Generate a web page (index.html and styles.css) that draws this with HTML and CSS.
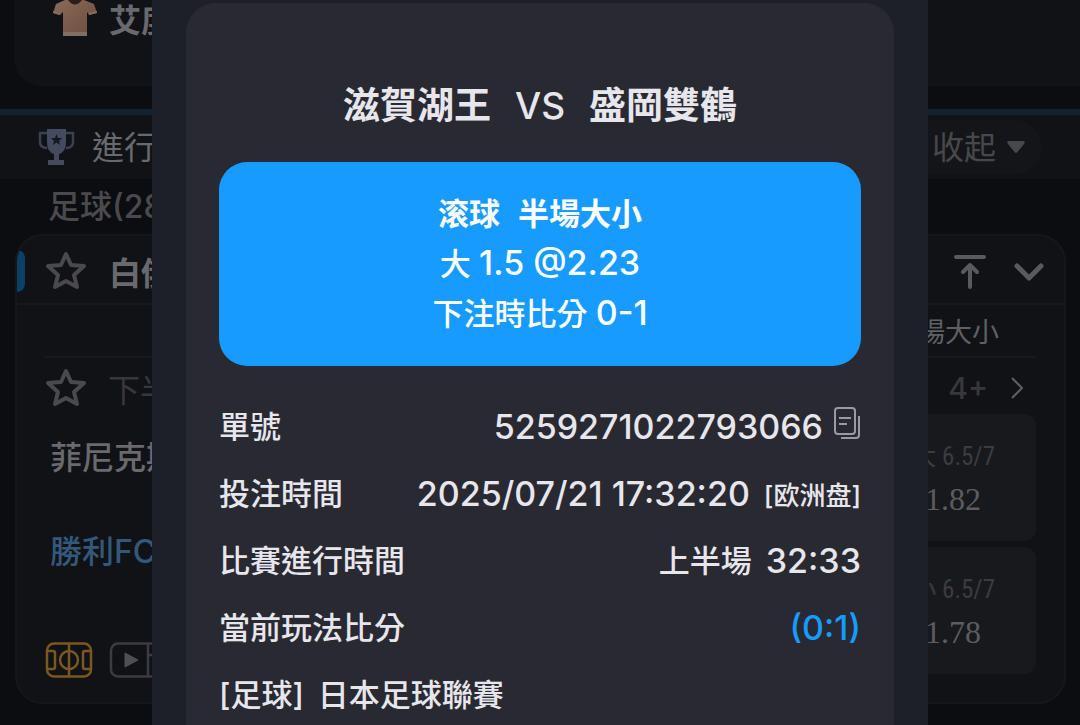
FILE: index.html
```html
<!DOCTYPE html>
<html lang="zh-Hant">
<head>
    <meta charset="UTF-8">
    <meta name="viewport" content="width=device-width, initial-scale=1.0">
    <title>注單詳情</title>
    <link rel="stylesheet" href="styles.css">
</head>
<body>
    <main class="page">
        <section class="top-card">
            <svg class="shirt" width="46" height="46" viewBox="0 0 46 46">
                <defs>
                    <linearGradient id="shirtFill" x1="0" y1="0" x2="1" y2="1">
                        <stop offset="0" stop-color="#8a6a58"/>
                        <stop offset="1" stop-color="#6b4c3e"/>
                    </linearGradient>
                </defs>
                <path d="M13 9 L32 9 L42 13 L45 22 L37 24 L35 21 V45 H11 V21 L8 24 L1 22 L4 13 Z" fill="url(#shirtFill)"/>
                <path d="M1 20 L8 22 V24 L1 22 Z M45 20 L37 22 V24 L45 22 Z M11 41 H35 V45 H11 Z" fill="#806f66"/>
                <path d="M16 9 Q23 18 30 9 Z" fill="#301c18"/>
            </svg>
            <b>艾度</b>
        </section>

        <header class="live-bar">
            <svg width="38" height="38" viewBox="0 0 38 38">
                <path d="M9 1 H28 V14 Q28 24 21 26 V32 H26 V37 H10 V32 H16 V26 Q9 24 9 14 Z" fill="#454b5e"/>
                <path d="M9 5 H2 V14 Q2 20 9 20 M28 5 H35 V14 Q35 20 28 20" fill="none" stroke="#3b4152" stroke-width="2.500"/>
                <path d="M18.500 6 L20 10 H24 L21 13 L22 17 L18.500 14.500 L15 17 L16 13 L13 10 H17 Z" fill="#151820"/>
            </svg>
            <span>進行</span>
            <button class="fold" type="button"><span>收起</span>
                <svg width="20" height="14" viewBox="0 0 20 14"><path d="M3 1 H17 Q20 1 18 4 L11.500 12 Q10 14 8.500 12 L2 4 Q0 1 3 1 Z" fill="currentColor"/></svg>
            </button>
        </header>

        <h2 class="sport">足球(28</h2>

        <section class="league">
            <div class="league-head">
                <svg class="star" width="42" height="42" viewBox="0 0 42 42"><path d="M21 4 L26 15 L39 16 L29 25 L32 37 L21 31 L10 37 L13 25 L3 16 L16 15 Z"/></svg>
                <b>白俄</b>
                <svg class="to-top" width="32" height="36" viewBox="0 0 32 36"><path d="M2 4 H30 M16 34 V12 M9 19 L16 12 L23 19"/></svg>
                <svg class="down" width="30" height="20" viewBox="0 0 30 20"><path d="M3 5 L15 17 L27 5"/></svg>
            </div>
            <div class="league-body">
                <div class="market">場大小</div>
                <div class="period">
                    <svg class="star" width="42" height="42" viewBox="0 0 42 42"><path d="M21 4 L26 15 L39 16 L29 25 L32 37 L21 31 L10 37 L13 25 L3 16 L16 15 Z"/></svg>
                    <span>下半</span>
                    <span class="more">4+</span>
                    <svg class="next" width="14" height="24" viewBox="0 0 14 24"><path d="M2 2 L12 12 L2 22"/></svg>
                </div>
                <div class="match">
                    <div class="teams">
                        <span>菲尼克斯</span>
                        <span class="serving">勝利FC</span>
                        <div class="tools">
                            <svg width="48" height="36" viewBox="0 0 48 36" fill="none" stroke="#7a5820" stroke-width="2.500">
                                <rect x="2" y="1.500" width="44" height="33" rx="7"/>
                                <path d="M24 2 V34 M2 9 H8 Q10 9 10 11 V25 Q10 27 8 27 H2 M46 9 H40 Q38 9 38 11 V25 Q38 27 40 27 H46"/>
                                <circle cx="24" cy="18" r="9"/>
                            </svg>
                            <svg width="54" height="36" viewBox="0 0 54 36" fill="none" stroke="#3c3c40" stroke-width="2.500">
                                <rect x="2" y="1.500" width="50" height="33" rx="7"/>
                                <path d="M39 2 V34 M39 13 H48"/>
                                <path d="M16 11 L29 18 L16 25 Z" fill="#505054" stroke="#505054" stroke-width="1"/>
                            </svg>
                        </div>
                    </div>
                    <div class="odds">
                        <button type="button"><span>大 6.5/7</span><strong>1.82</strong></button>
                        <button type="button"><span>小 6.5/7</span><strong>1.78</strong></button>
                    </div>
                </div>
            </div>
        </section>
    </main>

    <div class="modal" role="dialog" aria-labelledby="matchTitle">
        <div class="ticket">
            <h1 id="matchTitle"><span>滋賀湖王</span><span class="vs">VS</span><span>盛岡雙鶴</span></h1>
            <div class="bet">
                <p class="bet-type"><span>滚球</span><span>半場大小</span></p>
                <p>大 <span class="num">1.5 @2.23</span></p>
                <p>下注時比分 <span class="num">0-1</span></p>
            </div>
            <dl>
                <div class="row">
                    <dt>單號</dt>
                    <dd><span class="num">5259271022793066</span>
                        <button class="copy" type="button" aria-label="複製">
                            <svg width="28" height="34" viewBox="0 0 28 34" fill="none" stroke="#9a9aa6" stroke-width="2">
                                <rect x="2" y="2" width="20" height="26" rx="3"/>
                                <path d="M6 12 H18 M6 18 H14 M26 10 V29 Q26 32 23 32 H8"/>
                            </svg>
                        </button>
                    </dd>
                </div>
                <div class="row">
                    <dt>投注時間</dt>
                    <dd><span class="num">2025/07/21 17:32:20</span> <small>[欧洲盘]</small></dd>
                </div>
                <div class="row">
                    <dt>比賽進行時間</dt>
                    <dd><span class="half">上半場</span><span class="num">32:33</span></dd>
                </div>
                <div class="row">
                    <dt>當前玩法比分</dt>
                    <dd class="score num">(0:1)</dd>
                </div>
                <div class="row">
                    <dt class="tournament"><span>[足球]</span><span>日本足球聯賽</span></dt>
                </div>
            </dl>
        </div>
    </div>
</body>
</html>
```
FILE: styles.css
```css
* {
    box-sizing: border-box;
}

body {
    margin: 0;
    height: 100vh;
    overflow: hidden;
    background-color: #0c0d11;
    color: #6a6a6e;
    font-family: Inter, "Noto Sans CJK TC", sans-serif;
    font-size: 32px;
}

h1, h2, p, dl, dd {
    margin: 0;
}

svg {
    display: block;
    flex: none;
}

button {
    border: none;
    font-family: inherit;
    cursor: pointer;
}

/* page behind the dialog */
.top-card {
    display: flex;
    align-items: flex-start;
    gap: 11px;
    height: 86px;
    margin-left: 14px;
    padding-left: 38px;
    background: #111216;
    border-bottom: 1px solid #15161a;
    border-bottom-left-radius: 28px;
    line-height: 42px;
}

.shirt {
    margin-top: -9px;
}

.live-bar {
    display: flex;
    align-items: center;
    height: 70px;
    margin-top: 23px;
    padding: 0 38px;
    border-top: 6px solid #13222e;
    background: #111216;
}

.live-bar span {
    padding-bottom: 4px;
}

.live-bar > span {
    margin-left: 16px;
}

.fold {
    display: flex;
    align-items: center;
    gap: 10px;
    height: 54px;
    margin-left: auto;
    padding: 0 16px 0 30px;
    border-radius: 27px;
    background: #141519;
    color: #48484b;
    font-size: 32px;
}

.sport {
    padding: 8px 48px 7px;
    color: #4a4a4e;
    font-size: 32px;
    font-weight: 500;
    line-height: 40px;
}

.league {
    margin: 0 14px 0 15px;
    border: 2px solid #16171b;
    border-radius: 28px;
    background: #111216;
    overflow: hidden;
}

.league-head {
    display: flex;
    align-items: center;
    height: 69px;
    padding-top: 2px;
    padding-right: 20px;
    border-bottom: 2px solid #18191d;
}

.league-head::before {
    content: "";
    width: 8px;
    height: 42px;
    margin-right: 20px;
    border-radius: 0 10px 10px 0;
    background: #0c4167;
}

.league-head b {
    margin-left: 22px;
}

.star, .to-top, .down, .next {
    fill: none;
    stroke: #4a4a4e;
    stroke-width: 4;
    stroke-linejoin: round;
}

.to-top {
    margin-left: auto;
    stroke: #5a5a5e;
    stroke-linecap: round;
}

.down {
    margin-left: 28px;
    stroke: #5a5a5e;
    stroke-width: 5;
    stroke-linecap: round;
}

.league-body {
    padding: 0 28px 24px;
}

.market {
    height: 53px;
    padding-right: 37px;
    border-bottom: 2px solid #18191d;
    color: #606064;
    font-size: 27px;
    line-height: 56px;
    text-align: right;
}

.period {
    display: flex;
    align-items: center;
    height: 56px;
    padding-top: 4px;
    padding-right: 12px;
    color: #38383c;
}

.period span {
    margin-left: 21px;
}

.period .more {
    margin-left: auto;
    font-size: 30px;
    font-weight: 500;
}

.next {
    margin-left: 22px;
    stroke: #606064;
    stroke-width: 2;
}

.match {
    display: flex;
    justify-content: space-between;
}

.teams {
    display: flex;
    flex-direction: column;
    padding: 23px 0 0 5px;
    font-weight: 500;
    line-height: 42px;
}

.teams .serving {
    margin-top: 52px;
    color: #33597a;
}

.tools {
    display: flex;
    gap: 16px;
    margin-top: 69px;
    margin-left: -5px;
}

.odds {
    display: flex;
    flex-direction: column;
    gap: 6px;
    width: 190px;
}

.odds button {
    display: flex;
    flex-direction: column;
    align-items: flex-end;
    height: 127px;
    padding: 22px 41px 0 0;
    border-radius: 12px;
    background: #18191c;
    color: #3c3c40;
    font-family: "Roboto Condensed", Roboto, "Noto Sans CJK TC", sans-serif;
    font-size: 25px;
    line-height: 42px;
}

.odds strong {
    padding-right: 14px;
    color: #5c5c60;
    font-family: "Liberation Serif", serif;
    font-size: 32px;
    font-weight: normal;
}

/* bet slip dialog */
.modal {
    position: fixed;
    inset: 0 152px;
    padding: 3px 34px 0;
    background: #1e2029;
    color: #e6e6ec;
    font-size: 31px;
}

.ticket {
    height: 100%;
    padding: 73px 33px 0;
    border-radius: 30px 30px 0 0;
    background: #292932;
}

h1 {
    display: flex;
    justify-content: center;
    gap: 24px;
    font-size: 37px;
    line-height: 60px;
}

.vs {
    font-weight: 500;
}

.bet {
    margin-top: 26px;
    padding: 27px;
    border-radius: 28px;
    background: #189bff;
    color: #fff;
    font-weight: 500;
    line-height: 50px;
    text-align: center;
}

.bet-type {
    display: flex;
    justify-content: center;
    gap: 18px;
    font-weight: bold;
}

.num {
    font-size: 34px;
}

.bet .num {
    line-height: 1;
}

dl {
    margin-top: 27px;
    font-weight: 500;
}

.row {
    display: flex;
    align-items: center;
    justify-content: space-between;
    height: 67px;
    white-space: nowrap;
}

dt, .half {
    padding-bottom: 4px;
}

dd, .tournament {
    display: flex;
    align-items: center;
    gap: 14px;
}

dd small {
    font-size: 26px;
}

.copy {
    margin-left: -4px;
    padding: 0 0 8px;
    background: none;
}

.score {
    color: #189bff;
}
```
